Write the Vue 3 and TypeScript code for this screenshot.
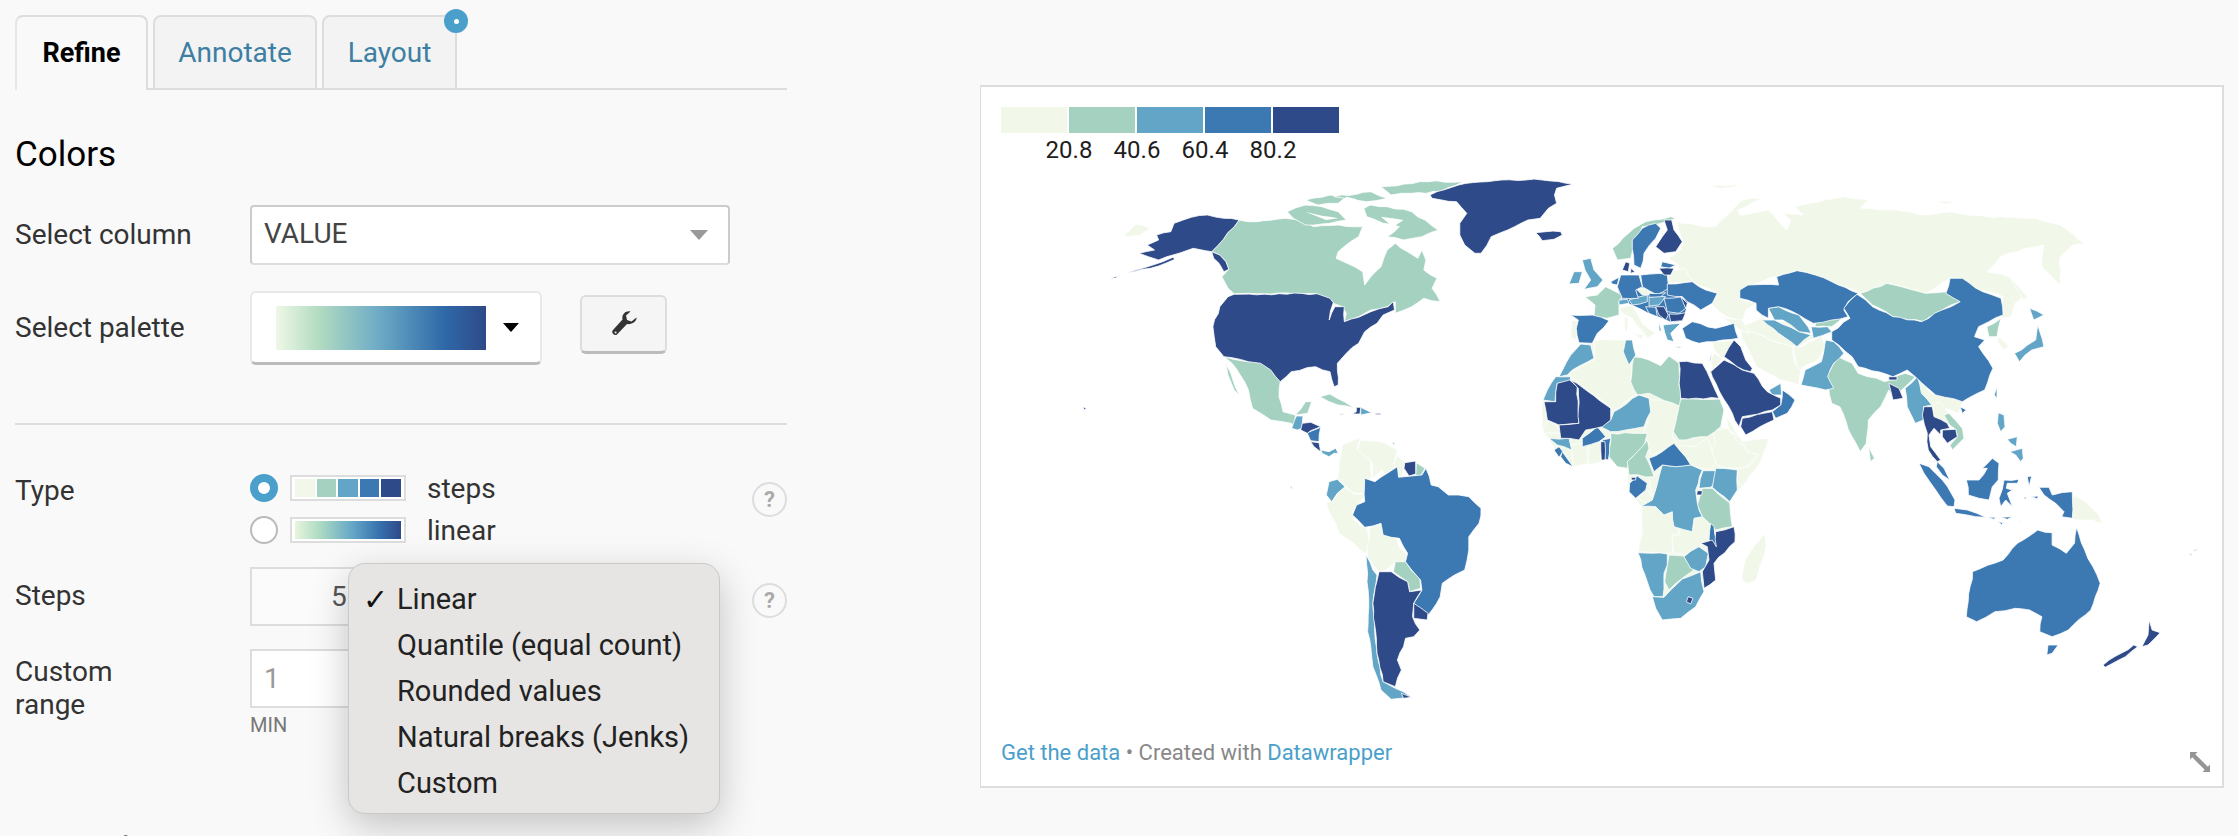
<script setup lang="ts">
type Crop = [number, number, number, number]
const crops: Record<string, Crop> = {
  a: [980, 80, 2.45, 3],
  e: [980, 440, 2.45, 3],
  i: [1600, 150, 2.45, 3],
  h: [1600, 440, 2.45, 3],
  f: [1480, 200, 3, 3],
  g: [1500, 400, 3, 3],
  j: [1880, 400, 3, 3],
  d: [1240, 400, 3, 3],
}
const palette = ['#f1f8ea', '#a5d2c0', '#62a5c7', '#3c78b1', '#2e4a88']
const bases: [number, string, string][] = [
  [0, 'g', '245,-168 380,-180 410,-135 485,-103 510,-132 540,-115 610,-110 660,-3 675,30 665,80 720,110 745,155 810,115 785,185 730,260 715,270 692,305 700,380 708,425 645,490 650,540 615,565 590,620 545,655 490,660 470,625 460,590 445,545 417,458 430,400 428,320 410,295 390,275 385,205 330,170 305,185 225,200 185,170 150,115 135,100 130,80 132,0 145,-30 170,-70 205,-75 215,-135'],
  [3, 'f', '415,260 490,260 570,265 625,305 620,330 610,362 575,365 540,350 510,340 460,315 430,300'],
  [0, 'i', '400,505 345,535 405,560 475,595 545,555 520,555 480,520'],
  [0, 'i', '775,680 820,735 860,730 890,755 880,790 840,770 800,770 790,730'],
]
const raw: [number, string, string][] = [
  // Russia and other pale land
  [0, 'i', '190,215 260,230 285,230 320,190 350,150 400,145 340,180 345,195 415,180 440,215 460,240 470,210 450,190 500,195 480,170 600,140 660,150 640,175 730,180 800,195 860,185 950,200 1070,205 1130,225 1190,280 1160,285 1130,320 1130,405 1085,350 1090,285 1045,295 985,320 950,365 1005,380 1040,440 1020,460 1010,500 985,505 990,440 940,420 885,450 850,430 860,385 800,430 710,400 640,430 600,410 530,375 490,362 430,380 345,420 345,445 385,460 360,480 350,520 300,490 265,445 290,430 230,395 200,390 195,345 170,325 200,300 205,280'],
  [0, 'i', '515,110 560,125 595,130 540,122'], [0, 'i', '805,150 890,158 850,162'], [0, 'i', '260,110 350,105 300,115'],
  [0, 'i', '1010,385 1050,440 1040,450 1020,410'],
  [0, 'i', '345,535 405,560 420,570 475,590 480,640 495,660 490,705 445,690 385,650 350,560'],
  [0, 'i', '475,590 500,590 545,555 555,590 540,625 490,660'],
  [0, 'i', '980,560 1005,590 990,600 975,570'],
  [0, 'f', '720,350 790,360 810,400 770,380'],
  [0, 'f', '700,425 765,420 750,460 730,475 705,450'], [0, 'f', '705,460 730,475 700,510 695,480'],
  [0, 'f', '420,325 460,315 490,370 530,400 505,415 460,355 430,340'], [0, 'f', '437,350 447,352 445,395 438,393'], [0, 'f', '465,400 495,405 485,418'],
  [0, 'f', '278,362 295,362 292,420 275,415'],
  [0, 'f', '345,422 400,420 440,420 450,475 460,500 455,545 475,580 405,632 275,530 270,520 345,480'],
  [0, 'f', '570,210 620,205 640,245 565,250'],
  [0, 'f', '470,265 510,262 532,285 490,285'],
  [0, 'g', '450,0 540,0 540,50 525,80 520,110 535,130 490,155 460,165 440,130 435,95 450,45'],
  [0, 'g', '640,90 685,85 720,130 780,160 740,205 715,205 660,200 635,165 650,130'],
  [0, 'g', '810,115 785,185 730,260 715,240 715,205 750,200 780,165 745,155 730,125'],
  [0, 'g', '680,50 720,110 690,90'],
  [0, 'g', '540,135 590,140 625,115 650,185 635,210 605,205 575,195 545,165'],
  [0, 'g', '270,130 305,125 305,185 270,195'], [0, 'g', '215,135 270,125 265,190 225,200'],
  [0, 'g', '130,80 155,60 190,100 135,100'],
  [0, 'g', '415,295 445,270 460,290 450,230 490,210 465,300 445,310'],
  [0, 'g', '593,287 608,287 610,310 598,310'],
  [0, 'g', '428,320 470,320 495,345 520,335 525,380 540,385 540,405 520,405 520,460 417,455 430,400'],
  [0, 'g', '540,385 580,395 585,350 610,350 635,370 632,420 600,440 570,465 525,460 520,405 540,405'],
  [0, 'h', '405,280 410,315 385,420 365,432 350,420 360,355'],
  [0, 'j', '160,20 180,5 210,40 212,75 165,50'],
  [0, 'j', '580,285 620,305 660,345 670,372 640,360 590,360 580,355'],
  [0, 'd', '345,120 365,112 355,145 395,185 398,235 380,240 378,280 345,280 315,255 295,235 300,190 310,135'],
  [0, 'd', '365,120 440,130 475,150 465,190 470,205 435,225 430,210 400,235 398,185 355,150'],
  [0, 'd', '475,165 500,190 495,205 485,240 465,205 465,190'],
  [0, 'd', '262,305 280,305 295,280 318,262 345,282 378,282 338,335 345,360 370,380 385,385 388,440 380,462 345,430 300,400 275,345'],
  [0, 'd', '390,385 425,370 470,405 480,440 505,465 500,490 465,490 440,510 420,515 385,470'],
  [0, 'a', '355,465 385,432 420,445 395,465 365,470'],
  // Canada, Mexico and other mid green
  [1, 'a', '637,420 680,425 750,415 790,420 820,440 880,435 940,440 930,470 880,515 875,535 920,560 940,575 945,615 960,590 985,560 1000,510 1020,490 1050,515 1075,535 1085,510 1095,540 1090,570 1122,595 1110,625 1130,665 1090,655 1060,680 1020,700 1020,665 1000,680 960,690 930,710 895,725 900,700 890,680 855,660 828,641 625,641 610,625 595,590 612,568 605,545 590,525 570,515'],
  [1, 'a', '755,395 800,375 840,380 880,395 900,420 860,430 800,435 770,415'],
  [1, 'a', '800,360 860,345 900,350 880,370 830,375'],
  [1, 'a', '940,375 1000,380 1060,395 1125,450 1085,470 1040,480 1000,470 1030,440 990,430 950,410'],
  [1, 'a', '985,320 1100,305 1185,305 1130,335 1060,340 1010,345'],
  [1, 'a', '870,350 960,335 1000,355 950,365'],
  [1, 'a', '600,830 660,845 690,845 720,870 738,905 735,950 745,995 775,1005 800,965 815,965 805,1000 775,1005 775,1040 765,1030 715,1020 670,985 660,930 640,885 620,850'],
  [1, 'a', '605,840 622,900 638,945 625,930 610,885'],
  [1, 'a', '835,950 860,942 895,965 920,985 880,975'],
  [1, 'd', '302,40 320,42 305,46'],
  [1, 'd', '532,188 558,205 545,228 530,228'],
  [1, 'e', '1015,395 1020,365 1045,365 1062,395 1080,415 1082,445 1055,455 1050,425'],
  [1, 'f', '400,145 465,85 500,65 575,50 590,55 545,70 490,80 455,175 415,180'],
  [1, 'f', '380,260 410,275 430,285 420,310 420,345 385,355 345,350 348,315 318,290 355,285'],
  [1, 'f', '465,470 510,480 545,497 570,468 600,490 605,620 510,580 475,585 455,545'],
  [1, 'f', '605,597 722,597 735,630 725,680 685,710 600,720 583,695 600,620'],
  [1, 'g', '335,100 400,100 445,100 430,150 395,175 385,205 355,200 330,170'],
  [1, 'g', '445,120 450,145 440,170 465,230 390,225 385,185 415,155'],
  [1, 'g', '610,265 640,265 692,308 700,380 650,390 610,350 595,315'],
  [1, 'g', '510,465 555,468 585,510 550,535 510,570 497,545 505,495'],
  [1, 'i', '640,430 705,400 800,430 850,425 885,455 840,480 795,515 720,500 670,465'],
  [1, 'i', '530,510 600,500 570,530 530,530'],
  [1, 'i', '585,620 620,640 635,670 700,695 750,670 775,680 750,710 720,745 710,720 690,770 660,810 655,880 640,905 620,860 590,770 570,760 555,680 575,640'],
  [1, 'i', '660,890 675,925 665,935'],
  [1, 'i', '950,530 985,505 975,560 955,560'],
  [1, 'j', '210,40 250,85 255,115 220,150 213,135 235,110 230,88 212,75 195,45'],
  [1, 'h', '1445,342 1455,340 1450,347'], [1, 'h', '1455,330 1470,325 1460,334'],
  // Light blue
  [2, 'd', '172,48 192,48 190,70 190,85 175,90 158,85 165,65'],
  [2, 'd', '245,150 270,155 290,145 298,160 285,160 270,170 250,160'],
  [2, 'd', '365,22 398,38 365,45'],
  [2, 'd', '270,245 295,238 318,260 295,280 278,305 262,285'],
  [2, 'd', '155,255 160,265 155,266'], [2, 'd', '460,128 467,128 465,136'],
  [2, 'e', '948,345 965,390 975,405 965,490 975,640 990,725 1020,745 1060,772 1010,778 985,750 965,680 960,620 952,575 955,500 952,400'],
  [2, 'f', '305,432 335,435 345,475 280,510 265,525 240,530 275,465'],
  [2, 'f', '230,530 275,530 272,545 235,550 228,605 192,600 205,570'],
  [2, 'f', '440,420 460,420 470,465 450,495 433,455'],
  [2, 'f', '405,635 480,585 510,595 515,635 495,680 440,690 395,695 365,680 395,660'],
  [2, 'f', '310,180 335,175 345,210 372,240 355,260 315,268 335,240 318,210'],
  [2, 'f', '285,215 310,215 300,250 270,252'],
  [2, 'f', '420,300 445,298 450,310 420,315'], [2, 'f', '450,300 505,285 505,305 460,315'],
  [2, 'f', '510,292 560,290 540,315 510,318'],
  [2, 'f', '540,365 548,395 540,390'], [2, 'f', '552,375 605,370 575,400 585,425 565,420'],
  [2, 'f', '585,440 610,440 600,444'], [2, 'f', '700,450 695,480 690,485'],
  [2, 'f', '870,570 905,550 908,585 880,585'],
  [2, 'g', '150,115 210,115 218,150 195,140 175,135'],
  [2, 'g', '490,195 530,200 575,195 610,210 590,270 595,310 610,350 585,355 580,395 525,380 520,335 495,345 470,320 425,320 460,300 480,230'],
  [2, 'g', '612,212 650,212 650,245 635,262 600,265'],
  [2, 'g', '650,205 715,210 715,270 692,305 640,262'],
  [2, 'g', '555,470 600,440 628,460 620,500 600,515 575,505'],
  [2, 'g', '417,458 505,462 505,495 495,520 492,590 465,590 445,545'],
  [2, 'g', '495,592 515,570 550,537 605,515 615,575 590,620 545,655 490,660 470,625 460,590'],
  [2, 'i', '400,510 430,510 490,545 520,555 485,590 440,550'],
  [2, 'i', '415,475 440,470 490,495 520,550 490,545 450,510 430,510'],
  [2, 'i', '520,530 560,530 570,545 525,565'],
  [2, 'i', '555,570 575,575 600,610 575,640 560,680 575,715 555,720 495,705 505,660 545,635 550,610'],
  [2, 'i', '750,715 780,680 790,730 815,765 795,770 795,810 775,820 755,770'],
  [2, 'i', '1075,525 1090,590 1060,600 1030,635 1018,610 1050,585 1070,570'],
  [2, 'i', '1055,475 1090,495 1065,510'], [2, 'i', '975,710 975,745 968,735'],
  [2, 'j', '358,38 375,45 378,80 365,95 355,70'], [2, 'j', '385,118 415,110 412,140 395,130'],
  [2, 'j', '392,155 430,145 433,175 425,185 410,165'], [2, 'j', '340,155 362,128 345,150'],
  // Mid blue
  [3, 'e', '945,115 970,125 1000,100 1025,80 1028,112 1060,108 1085,105 1095,85 1108,135 1125,140 1150,165 1200,170 1230,205 1225,250 1200,290 1200,330 1190,390 1165,405 1135,430 1130,470 1110,510 1100,525 1065,490 1085,450 1082,420 1060,390 1045,365 1050,340 1030,295 990,285 985,250 945,262 915,225 925,195 945,185'],
  [3, 'd', '212,95 245,82 240,125 215,122 205,100'],
  [3, 'f', '490,85 530,70 545,85 530,115 495,160 485,205 465,195 460,120'],
  [3, 'f', '550,185 590,195 570,205 545,200'],
  [3, 'f', '485,225 565,222 570,265 535,285 490,260'],
  [3, 'f', '425,225 480,225 490,260 470,270 478,295 430,295 415,260'],
  [3, 'f', '395,245 420,232 415,255 400,252'],
  [3, 'f', '275,345 340,345 390,362 355,400 340,430 300,428 292,385 298,360'],
  [3, 'f', '510,280 560,278 545,290 510,292'],
  [3, 'f', '565,252 640,245 680,270 715,280 700,310 665,330 625,305 610,290 565,285'],
  [3, 'f', '555,295 610,290 620,325 600,340 565,335'],
  [3, 'f', '500,320 530,322 535,350 510,340'],
  [3, 'f', '610,385 640,365 710,385 765,370 778,415 705,425 660,430 620,415'],
  [3, 'f', '910,570 948,600 925,640 890,655 880,635 905,615'],
  [3, 'g', '250,115 295,80 320,110 300,125 250,140'],
  [3, 'g', '310,120 335,115 328,180 318,178'],
  [3, 'g', '165,150 180,140 192,155 180,172'], [3, 'g', '190,155 222,200 200,190 185,170'],
  [3, 'g', '450,175 490,155 525,130 575,195 530,200 490,195 465,215'],
  [3, 'g', '392,250 415,228 445,250 440,270 410,295 390,275'],
  [3, 'g', '635,370 645,380 655,445 630,420'],
  [3, 'i', '345,420 365,405 440,405 435,380 485,362 530,375 570,395 635,430 610,455 600,480 610,500 570,510 525,520 490,495 440,470 415,475 415,505 385,480 385,460 345,445'],
  [3, 'i', '570,545 615,505 600,475 632,433 670,470 720,500 790,515 840,480 885,455 850,430 860,385 890,385 940,425 985,445 990,495 955,515 930,530 920,560 945,570 930,590 965,655 945,720 890,755 825,735 775,680 755,660 720,680 635,650 620,620 570,570'],
  [3, 'i', '885,770 900,780 890,790'],
  [3, 'j', '175,185 195,205 212,240 190,225 172,200'],
  [3, 'j', '120,190 150,200 190,240 228,300 225,320 205,318 170,270 135,220'],
  [3, 'j', '225,325 265,330 320,352 290,350 230,340'],
  [3, 'j', '262,240 300,240 325,205 310,205 340,175 360,190 358,240 340,260 330,300 300,295 268,285'],
  [3, 'j', '375,240 420,238 415,250 385,250 382,265 400,270 385,280 400,320 380,300 365,320 360,295'],
  [3, 'j', '480,262 510,262 520,285 580,275 580,355 548,350 555,335 530,310 495,285'],
  [3, 'j', '325,352 350,352 345,358'], [3, 'j', '365,352 400,350 385,358'], [3, 'j', '455,290 478,288 475,296'], [3, 'j', '445,230 458,228 450,260'], [3, 'j', '432,292 442,292 440,298'], [3, 'j', '358,365 372,368 368,374'],
  [3, 'h', '1170,262 1190,330 1210,380 1228,430 1205,510 1150,570 1110,590 1080,575 1085,530 1055,510 1020,505 970,515 925,545 900,530 915,395 990,360 1025,310 1075,270 1110,278 1110,315 1145,340 1165,310'],
  [3, 'h', '1100,615 1125,615 1110,640 1097,645'],
  // Dark blue
  [4, 'a', '1105,345 1175,315 1280,300 1380,300 1455,313 1415,325 1410,345 1415,370 1395,385 1375,415 1345,420 1295,450 1255,470 1230,520 1215,520 1190,495 1178,465 1178,430 1195,400 1170,365 1110,355'],
  [4, 'f', '170,98 200,95 245,95 250,105 225,118 190,122 180,108'],
  [4, 'a', '637,420 600,415 560,405 520,412 478,430 470,455 435,465 440,480 412,495 430,510 392,520 415,530 440,540 460,530 490,520 525,505 555,512 570,515'],
  [4, 'a', '362,578 400,565 450,545 475,532 480,538 420,565'],
  [4, 'a', '570,515 590,525 605,545 612,568 600,575 588,550 575,535'],
  [4, 'a', '322,595 340,588 335,594'], [4, 'a', '255,980 263,985 258,990'],
  [4, 'a', '625,643 828,641 860,655 868,668 858,720 872,680 895,680 895,725 930,712 960,695 1002,680 1015,665 1018,690 990,705 975,730 945,755 930,790 900,820 878,850 880,915 870,920 860,875 825,860 765,875 738,905 715,870 690,850 660,845 600,830 580,800 573,740 590,680 610,650'],
  [4, 'd', '190,70 215,67 245,80 215,92 205,100 185,90'],
  [4, 'd', '215,125 240,128 245,155 225,140'],
  [4, 'd', '352,22 365,22 363,42 340,42 352,35'], [4, 'd', '410,40 425,40 425,44 410,44'],
  [4, 'd', '497,188 530,183 530,222 510,228 495,205'],
  [4, 'e', '980,395 1010,395 1050,425 1055,455 1085,450 1065,490 1062,530 1080,570 1065,590 1045,595 1040,620 1025,660 1035,690 1020,740 990,725 975,640 965,490'],
  [4, 'e', '1065,490 1100,520 1098,540 1065,535'], [4, 'e', '1035,760 1060,772 1040,775'],
  [4, 'f', '230,605 235,550 272,540 295,560 300,670 240,675 205,660 195,605'],
  [4, 'f', '275,540 395,625 395,660 370,680 320,690 300,720 245,715 240,675 300,670 298,565'],
  [4, 'f', '600,485 670,490 695,540 720,595 605,595'],
  [4, 'f', '555,60 578,60 585,90 610,125 590,155 555,160 530,140 550,110 565,90'],
  [4, 'f', '440,185 452,190 448,215 430,210'], [4, 'f', '455,205 468,215 455,220'],
  [4, 'f', '540,205 585,205 575,225 555,225'],
  [4, 'f', '605,290 625,310 620,325'],
  [4, 'f', '570,342 620,338 610,362 575,365'],
  [4, 'f', '530,320 555,320 568,345 560,360 540,345'],
  [4, 'f', '695,515 735,480 790,510 825,520 865,575 905,595 905,615 880,630 790,650 780,680 760,640 700,530'],
  [4, 'f', '735,470 765,420 785,440 800,480 820,505 815,515 775,500'],
  [4, 'f', '790,655 880,635 885,660 800,705 785,680'],
  [4, 'g', '305,125 318,125 318,180 307,180'],
  [4, 'g', '397,232 410,232 410,240 397,240'],
  [4, 'g', '595,272 610,272 608,285 593,285'],
  [4, 'g', '650,395 705,380 708,425 645,490 650,540 615,565 610,515 630,480 625,440 605,430 640,420 652,440'],
  [4, 'g', '568,590 582,595 575,612 562,605'],
  [4, 'i', '710,700 735,715 745,745 720,750'], [4, 'i', '710,680 730,680 730,690 710,690'],
  [4, 'j', '135,20 160,20 165,50 205,70 212,85 185,90 185,105 165,85 150,105 155,140 185,180 175,185 148,150 145,100 130,45'],
  [4, 'j', '190,90 230,88 235,110 205,130 190,110'],
  [4, 'j', '400,375 440,352 420,365'],
  [4, 'h', '1235,675 1310,615 1320,620 1290,650 1240,682'],
  [4, 'h', '1348,540 1355,570 1375,578 1345,615 1330,620 1345,585'],
]
const channels: [string, string][] = [
  ['a', '800,395 880,415 850,420'],
  ['a', '900,350 960,375 930,395 880,375'],
  ['a', '1000,355 1040,345 1080,365 1030,375'],
  ['a', '985,410 1040,420 1015,440'],
]
// Long straight edges get a small, repeatable wobble so coasts read as coasts.
const wobble = (x: number, y: number): number => {
  const v = Math.sin(x * 12.9898 + y * 78.233) * 43758.5453
  return (v - Math.floor(v) - 0.5) * 2
}
const place = (key: string, pts: string): string => {
  const [ox, oy, sx, sy] = crops[key]
  const nodes = pts.split(' ').map((p) => {
    const [x, y] = p.split(',').map(Number)
    return [ox + x / sx, oy + y / sy]
  })
  const out: string[] = []
  nodes.forEach(([x, y], n) => {
    const [nx, ny] = nodes[(n + 1) % nodes.length]
    out.push(`${x.toFixed(1)},${y.toFixed(1)}`)
    const len = Math.hypot(nx - x, ny - y)
    const steps = Math.floor(len / 7)
    for (let s = 1; s < steps; s++) {
      const px = x + ((nx - x) * s) / steps
      const py = y + ((ny - y) * s) / steps
      const w = wobble(px, py) * 0.9
      const qx = px - ((ny - y) / len) * w
      const qy = py + ((nx - x) / len) * w
      out.push(`${qx.toFixed(1)},${qy.toFixed(1)}`)
    }
  })
  return out.join(' ')
}
const baseShapes = bases.map(([c, key, pts]) => ({ fill: palette[c], points: place(key, pts) }))
const shapes = raw.map(([c, key, pts]) => ({ fill: palette[c], points: place(key, pts) }))
const gaps = channels.map(([key, pts]) => place(key, pts))
const ticks = ['20.8', '40.6', '60.4', '80.2']
const menu = ['Linear', 'Quantile (equal count)', 'Rounded values', 'Natural breaks (Jenks)', 'Custom']
</script>

<template>
  <div class="page">
    <section class="side">
      <nav class="tabs">
        <div class="tab on">Refine</div>
        <div class="tab annotate">Annotate</div>
        <div class="tab layout">Layout<span class="badge"><i></i></span></div>
      </nav>
      <h2 class="h-colors">Colors</h2>
      <div class="row r-col">
        <label>Select column</label>
        <div class="select">VALUE<b class="caret"></b></div>
      </div>
      <div class="row r-pal">
        <label>Select palette</label>
        <div class="pal"><span class="pal-grad"></span><b class="pal-caret"></b></div>
        <button class="wrench">
          <svg viewBox="0 0 26 26" width="26" height="26">
            <path fill="#333" d="M25.5 6.5l-5 4-4.5-1.5-1-4.5 4.5-4c-5-1-9 3-8 8L2 19c-2.500 2.500 1.500 6.500 4 4.500l10-10.500c5 1 10-3 9.500-6.500z" />
            <circle cx="4.600" cy="21.400" r="1" fill="#f4f4f4" />
          </svg>
        </button>
      </div>
      <hr class="rule" />
      <div class="row r-type">
        <label>Type</label>
        <div class="types">
          <div class="opt">
            <span class="radio checked"></span>
            <span class="swatch"><i style="background:#f1f8ea"></i><i style="background:#a5d2c0"></i><i style="background:#62a5c7"></i><i style="background:#3c78b1"></i><i style="background:#2e4a88"></i></span>
            <span class="opt-t">steps</span>
          </div>
          <div class="opt">
            <span class="radio"></span>
            <span class="swatch"><i class="lin"></i></span>
            <span class="opt-t">linear</span>
          </div>
        </div>
        <span class="help">?</span>
      </div>
      <div class="row r-steps">
        <label>Steps</label>
        <div class="num">5</div>
        <span class="help">?</span>
      </div>
      <div class="row r-range">
        <label>Custom<br />range</label>
        <div>
          <div class="num min">1</div>
          <div class="cap">MIN</div>
        </div>
      </div>
      <h2 class="h-legend">Legend</h2>
      <ul class="menu">
        <li v-for="(m, n) in menu" :key="m"><span class="tick">{{ n === 0 ? '✓' : '' }}</span>{{ m }}</li>
      </ul>
    </section>

    <section class="card">
      <div class="legend">
        <div class="bars"><i v-for="c in palette" :key="c" :style="{ background: c }"></i></div>
        <div class="ticks"><span v-for="t in ticks" :key="t">{{ t }}</span></div>
      </div>
      <svg class="map" viewBox="982 170 1240 565">
        <polygon v-for="(s, n) in baseShapes" :key="'b' + n" :points="s.points" :fill="s.fill" />
        <polygon v-for="(s, n) in shapes" :key="n" :points="s.points" :fill="s.fill" stroke="#fff" stroke-width="0.8" stroke-linejoin="round" />
        <polygon v-for="(g, n) in gaps" :key="'g' + n" :points="g" fill="#fff" />
      </svg>
      <div class="foot">
        <p><a>Get the data</a> • Created with <a>Datawrapper</a></p>
        <svg viewBox="0 0 20 20" width="20" height="20" class="resize">
          <path fill="#8a8a8a" d="M0 0h7.500l-2.200 2.200 12.500 12.500 2.200-2.200v7.500h-7.500l2.200-2.200L2.200 5.300 0 7.500z" />
        </svg>
      </div>
    </section>
  </div>
</template>

<style>
html, body { background: #f9f9f9; }
</style>

<style scoped>
.page { width: 2238px; height: 836px; overflow: hidden; display: flex; background: #f9f9f9; font-family: Roboto, "Liberation Sans", sans-serif; color: #333; }
.side { position: relative; width: 772px; height: 836px; margin-left: 15px; flex: none; overflow: visible; }
.tabs { display: flex; gap: 5px; margin-top: 15px; border-bottom: 2px solid #ddd; height: 73px; }
.tab { position: relative; box-sizing: border-box; height: 75px; border: 2px solid #ddd; border-radius: 8px 8px 0 0; background: #f3f3f3; font-size: 28px; line-height: 72px; text-align: center; color: #3d7fa3; }
.tab.on { width: 133px; background: #f9f9f9; border-bottom: 0; border-left-color: #e6e6e6; color: #000; font-weight: 700; font-size: 27px; }
.tab.annotate { width: 164px; }
.tab.layout { width: 135px; }
.badge { position: absolute; right: -13px; top: -8px; width: 24px; height: 24px; border-radius: 50%; background: #4aa0cb; display: flex; align-items: center; justify-content: center; }
.badge i { width: 5px; height: 5px; border-radius: 50%; background: #fff; }
h2 { margin: 0; font-weight: 400; color: #000; font-size: 35px; line-height: 42px; }
.h-colors { margin-top: 44px; }
.row { display: flex; }
.row label { width: 235px; flex: none; font-size: 28px; line-height: 32px; color: #333; }
.r-col { margin-top: 29px; height: 60px; align-items: center; }
.select { position: relative; box-sizing: border-box; width: 480px; height: 60px; background: #fff; border: 2px solid #ccc; border-bottom-color: #ddd; border-radius: 4px; padding-left: 12px; font-size: 28px; line-height: 54px; color: #444; }
.caret { position: absolute; right: 20px; top: 23px; border-left: 9px solid transparent; border-right: 9px solid transparent; border-top: 10px solid #999; }
.r-pal { margin-top: 26px; height: 74px; align-items: center; }
.pal { box-sizing: border-box; width: 292px; height: 74px; background: #fff; border: 2px solid #e8e8e8; border-bottom: 3px solid #bbb; border-radius: 6px; display: flex; align-items: center; padding-left: 24px; }
.pal-grad { width: 210px; height: 44px; background: linear-gradient(90deg, #eff8e6 0%, #b3dcc0 20%, #6fadc6 48%, #2f69a8 80%, #2e4a88 100%); }
.pal-caret { margin-left: 17px; border-left: 8px solid transparent; border-right: 8px solid transparent; border-top: 9px solid #000; }
.wrench { box-sizing: border-box; margin: 0 0 7px 38px; width: 87px; height: 59px; padding: 0; background: #f5f5f5; border: 2px solid #ddd; border-bottom: 3px solid #bbb; border-radius: 6px; display: flex; align-items: center; justify-content: center; }
.rule { border: 0; border-top: 2px solid #ddd; margin: 58px 0 0; }
.r-type { margin-top: 49px; height: 70px; position: relative; }
.r-type label { padding-top: 1px; }
.types { display: flex; flex-direction: column; gap: 14px; width: 502px; }
.opt { display: flex; align-items: center; height: 28px; }
.radio { box-sizing: border-box; width: 28px; height: 28px; border-radius: 50%; border: 2px solid #bbb; background: #fff; }
.radio.checked { border: 8px solid #4aa0cb; }
.swatch { box-sizing: border-box; margin-left: 12px; width: 116px; height: 26px; padding: 2px 3px; background: #fff; border: 2px solid #ddd; display: flex; gap: 2px; }
.swatch i { flex: 1; }
.swatch i.lin { background: linear-gradient(90deg, #e8f5dd 0%, #a9d8c2 25%, #63a5c7 55%, #3670ad 80%, #2e4a88 100%); }
.opt-t { margin-left: 21px; font-size: 28px; color: #333; }
.help { box-sizing: border-box; width: 35px; height: 35px; border: 2px solid #ddd; border-radius: 50%; text-align: center; font-size: 22px; line-height: 31px; font-weight: 700; color: #aaa; flex: none; }
.r-type .help { margin-top: 8px; }
.r-steps { margin-top: 23px; height: 59px; }
.r-steps label { padding-top: 13px; }
.r-steps .help { margin: 16px 0 0 202px; }
.num { box-sizing: border-box; width: 300px; height: 59px; background: #fbfbfb; border: 2px solid #ddd; text-align: left; padding-left: 79px; font-size: 28px; line-height: 55px; color: #555; }
.num.min { width: 200px; height: 59px; background: #fff; padding-left: 12px; color: #999; }
.r-range { margin-top: 23px; height: 84px; }
.r-range label { padding-top: 6px; line-height: 33px; }
.cap { margin-top: 5px; font-size: 20px; line-height: 24px; color: #777; }
.h-legend { margin-top: 97px; }
.menu { position: absolute; left: 333px; top: 563px; box-sizing: border-box; width: 372px; height: 251px; margin: 0; padding: 12px 0 0; list-style: none; background: #e6e5e3; border: 1px solid #c9c9c7; border-radius: 17px; box-shadow: 0 12px 38px rgba(0, 0, 0, 0.22); }
.menu li { display: flex; height: 46px; align-items: center; font-size: 29px; color: #222; }
.tick { width: 48px; padding-left: 14px; box-sizing: border-box; font-family: "DejaVu Sans", sans-serif; font-size: 30px; color: #111; }
.card { box-sizing: border-box; margin: 85px 0 0 193px; width: 1244px; height: 703px; background: #fff; border: 2px solid #ddd; border-left-width: 1px; display: flex; flex-direction: column; }
.legend { margin: 20px 0 0 20px; height: 63px; }
.bars { display: flex; gap: 2px; width: 338px; height: 26px; }
.bars i { flex: 1; }
.ticks { display: flex; margin: 2px 0 0 34px; font-size: 24px; line-height: 30px; color: #1d1d1d; }
.ticks span { width: 68px; text-align: center; }
.map { display: block; width: 1240px; height: 565px; }
.foot { display: flex; align-items: flex-start; justify-content: space-between; padding: 4px 12px 0 20px; font-size: 22px; line-height: 28px; color: #888; }
.foot p { margin: 0; }
.foot a { color: #4aa0cb; }
.resize { margin-top: 13px; opacity: 0.9; }
</style>
